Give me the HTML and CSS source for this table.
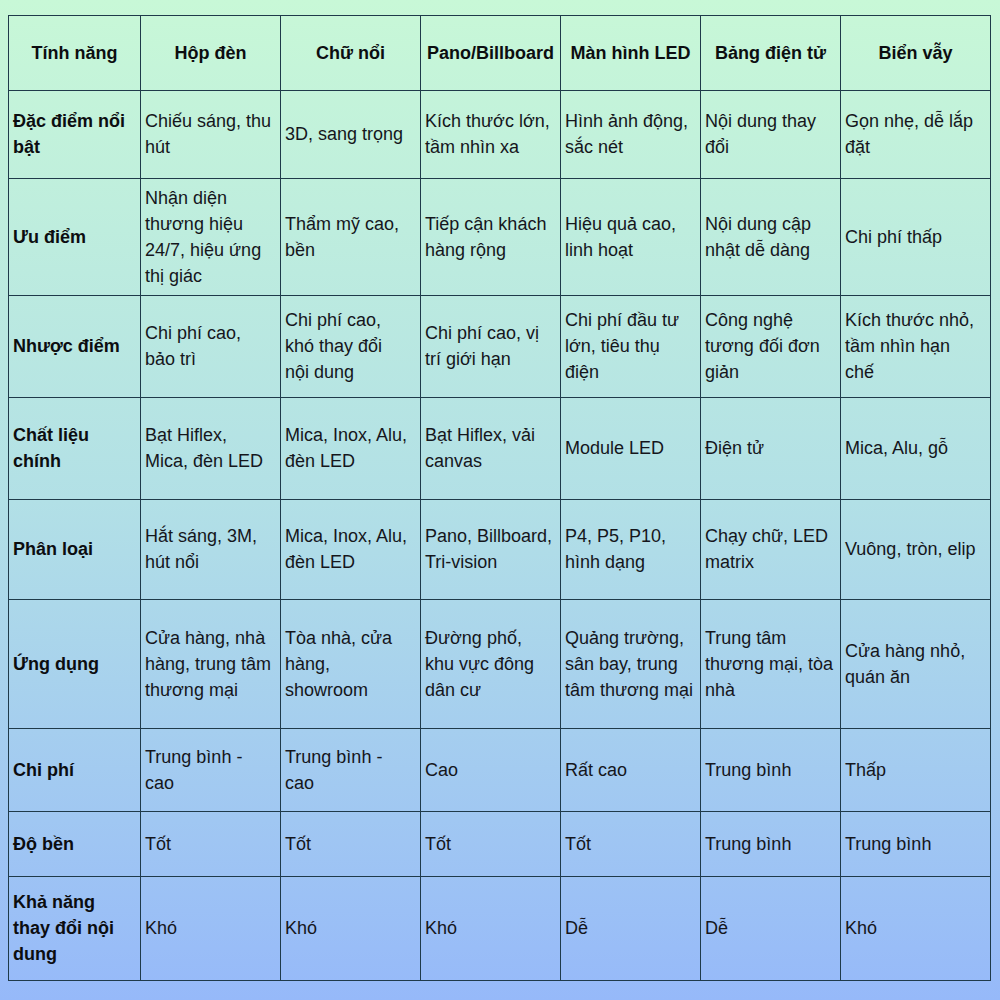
FILE: index.html
```html
<!DOCTYPE html>
<html lang="vi">
<head>
<meta charset="utf-8">
<title>So sánh biển quảng cáo</title>
<link rel="stylesheet" href="styles.css">
</head>
<body>
<table class="cmp">
  <colgroup>
    <col class="c-first"><col class="c-mid"><col class="c-mid"><col class="c-mid"><col class="c-mid"><col class="c-mid"><col class="c-last">
  </colgroup>
  <thead>
    <tr class="r-head">
      <th>Tính năng</th><th>Hộp đèn</th><th>Chữ nổi</th><th>Pano/Billboard</th><th>Màn hình LED</th><th>Bảng điện tử</th><th>Biển vẫy</th>
    </tr>
  </thead>
  <tbody>
    <tr class="r1">
      <th>Đặc điểm nổi bật</th><td>Chiếu sáng, thu hút</td><td>3D, sang trọng</td><td>Kích thước lớn, tầm nhìn xa</td><td>Hình ảnh động, sắc nét</td><td>Nội dung thay đổi</td><td>Gọn nhẹ, dễ lắp đặt</td>
    </tr>
    <tr class="r2">
      <th>Ưu điểm</th><td>Nhận diện thương hiệu 24/7, hiệu ứng thị giác</td><td>Thẩm mỹ cao, bền</td><td>Tiếp cận khách hàng rộng</td><td>Hiệu quả cao, linh hoạt</td><td>Nội dung cập nhật dễ dàng</td><td>Chi phí thấp</td>
    </tr>
    <tr class="r3">
      <th>Nhược điểm</th><td>Chi phí cao, bảo trì</td><td>Chi phí cao, khó thay đổi<br>nội dung</td><td>Chi phí cao, vị trí giới hạn</td><td>Chi phí đầu tư lớn, tiêu thụ điện</td><td>Công nghệ tương đối đơn giản</td><td>Kích thước nhỏ, tầm nhìn hạn chế</td>
    </tr>
    <tr class="r4">
      <th>Chất liệu chính</th><td>Bạt Hiflex, Mica, đèn LED</td><td>Mica, Inox, Alu, đèn LED</td><td>Bạt Hiflex, vải canvas</td><td>Module LED</td><td>Điện tử</td><td>Mica, Alu, gỗ</td>
    </tr>
    <tr class="r5">
      <th>Phân loại</th><td>Hắt sáng, 3M, hút nổi</td><td>Mica, Inox, Alu, đèn LED</td><td>Pano, Billboard, Tri-vision</td><td>P4, P5, P10, hình dạng</td><td>Chạy chữ, LED matrix</td><td>Vuông, tròn, elip</td>
    </tr>
    <tr class="r6">
      <th>Ứng dụng</th><td>Cửa hàng, nhà hàng, trung tâm thương mại</td><td>Tòa nhà, cửa hàng, showroom</td><td>Đường phố, khu vực đông dân cư</td><td>Quảng trường, sân bay, trung tâm thương mại</td><td>Trung tâm thương mại, tòa nhà</td><td>Cửa hàng nhỏ, quán ăn</td>
    </tr>
    <tr class="r7">
      <th>Chi phí</th><td>Trung bình - cao</td><td>Trung bình - cao</td><td>Cao</td><td>Rất cao</td><td>Trung bình</td><td>Thấp</td>
    </tr>
    <tr class="r8">
      <th>Độ bền</th><td>Tốt</td><td>Tốt</td><td>Tốt</td><td>Tốt</td><td>Trung bình</td><td>Trung bình</td>
    </tr>
    <tr class="r9">
      <th>Khả năng thay đổi nội dung</th><td>Khó</td><td>Khó</td><td>Khó</td><td>Dễ</td><td>Dễ</td><td>Khó</td>
    </tr>
  </tbody>
</table>
</body>
</html>
```
FILE: styles.css
```css
html {
  height: 100%;
  background: linear-gradient(180deg, #c8f8d7 0%, #b2e0e6 50%, #96b9f9 100%);
  background-attachment: fixed;
}
body {
  margin: 0;
  padding: 15px 8px 0 8px;
  min-height: 1000px;
  box-sizing: border-box;
  font-family: "Liberation Sans", Arial, sans-serif;
  font-size: 18px;
  line-height: 26px;
  color: #15161c;
}
.cmp {
  border-collapse: collapse;
  table-layout: fixed;
  width: 982px;
}
.c-first { width: 132px; }
.c-mid { width: 140px; }
.c-last { width: 150px; }
.cmp th,
.cmp td {
  border: 1px solid #1f3a4a;
  padding: 0 6px 1px 4px;
  vertical-align: middle;
  text-align: left;
  font-weight: normal;
}
.cmp th {
  font-weight: bold;
  color: #0c0d10;
}
.cmp thead th {
  text-align: center;
  padding: 0 2px;
}
.r-head { height: 75px; }
.r1 { height: 88px; }
.r2 { height: 117px; }
.r3 { height: 102px; }
.r4 { height: 102px; }
.r5 { height: 100px; }
.r6 { height: 129px; }
.r7 { height: 83px; }
.r8 { height: 65px; }
.r9 { height: 104px; }
```
